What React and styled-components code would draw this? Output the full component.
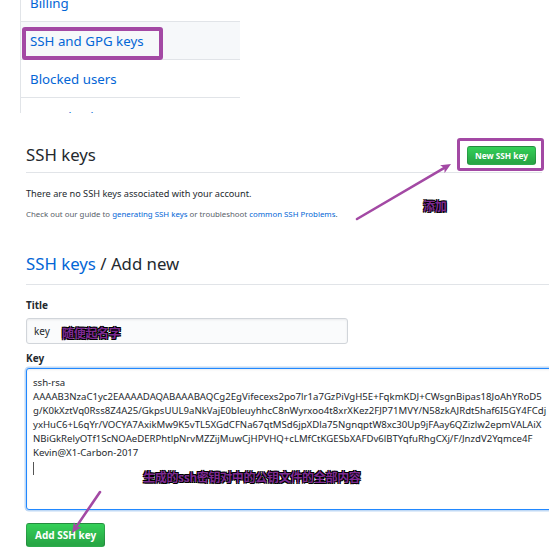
import React from "react";
import styled, { createGlobalStyle } from "styled-components";

const GlobalStyle = createGlobalStyle`
  html, body { margin: 0; padding: 0; background: #fff; }
  body {
    width: 549px;
    height: 556px;
    overflow: hidden;
    font-family: "Noto Sans", "Open Sans", sans-serif;
    color: #24292e;
  }
`;

const PURPLE = "#a349a4";

const Page = styled.div`
  position: relative;
  width: 549px;
  height: 556px;
  overflow: hidden;
`;

const SideMenu = styled.nav`
  margin-left: 20px;
  width: 219px;
  height: 113px;
  overflow: hidden;
  border-left: 1px solid #e1e4e8;
`;

const MenuList = styled.ul`
  list-style: none;
  margin: -16px 0 0;
  padding: 0;
`;

const MenuItem = styled.li`
  position: relative;
  height: 37px;
  display: flex;
  align-items: center;
  padding-left: 9px;
  border-bottom: 1px solid #e1e4e8;
  font-size: 13.3px;
  color: #0366d6;
  background: ${(p) => (p.$selected ? "#f6f8fa" : "transparent")};
`;

const HighlightBox = styled.span`
  position: absolute;
  left: ${(p) => p.$left}px;
  top: ${(p) => p.$top}px;
  width: ${(p) => p.$w}px;
  height: ${(p) => p.$h}px;
  box-sizing: border-box;
  border: ${(p) => p.$b}px solid ${PURPLE};
  border-radius: 3px;
  pointer-events: none;
`;

const Main = styled.main`
  margin-left: 26px;
`;

const Section = styled.section`
  width: ${(p) => p.$width}px;
  margin-top: ${(p) => p.$top}px;
`;

const Subhead = styled.div`
  display: flex;
  align-items: center;
  justify-content: space-between;
  padding-bottom: ${(p) => p.$pb}px;
  border-bottom: 1px solid #e1e4e8;
`;

const Heading = styled.h2`
  margin: 0;
  font-size: 16.8px;
  font-weight: 400;
  line-height: 22px;
  color: #24292e;
`;

const HeadLink = styled.span`
  color: #0366d6;
`;

const GreenButton = styled.button`
  position: relative;
  display: inline-flex;
  align-items: center;
  justify-content: center;
  box-sizing: border-box;
  height: ${(p) => p.$h}px;
  padding: 0 ${(p) => p.$px}px;
  margin-right: ${(p) => p.$mr || 0}px;
  font-family: inherit;
  font-size: ${(p) => p.$fs}px;
  font-weight: 700;
  color: #fff;
  background: linear-gradient(-180deg, #34d058 0%, #28a745 90%);
  border: 1px solid rgba(27, 31, 35, 0.2);
  border-radius: 3px;
  white-space: nowrap;
`;

const Plain = styled.p`
  margin: ${(p) => p.$mt}px 0 0;
  font-size: ${(p) => p.$fs}px;
  line-height: ${(p) => p.$lh}px;
  color: ${(p) => p.$color || "#24292e"};
`;

const A = styled.span`
  color: #0366d6;
`;

const Label = styled.div`
  margin-top: ${(p) => p.$mt}px;
  font-size: 10px;
  font-weight: 700;
  line-height: 14px;
`;

const TitleInput = styled.div`
  margin-top: 6px;
  box-sizing: border-box;
  width: 322px;
  height: 26px;
  display: flex;
  align-items: center;
  padding-left: 7px;
  background: #fafbfc;
  border: 1px solid #d1d5da;
  border-radius: 3px;
  box-shadow: inset 0 1px 2px rgba(27, 31, 35, 0.075);
  font-size: 10px;
  color: #24292e;
`;

const KeyArea = styled.div`
  margin-top: 3px;
  box-sizing: border-box;
  width: 560px;
  height: 142px;
  padding: 7px 6px 5px;
  background: #fff;
  border: 1px solid #2188ff;
  border-radius: 3px;
  box-shadow: inset 0 1px 2px rgba(27, 31, 35, 0.075), 0 0 0 1.5px rgba(3, 102, 214, 0.25);
  font-size: 9.6px;
  line-height: 14px;
  color: #24292e;
  white-space: nowrap;
  overflow: hidden;
`;

const Caret = styled.span`
  display: block;
  width: 1px;
  height: 13px;
  margin-top: 2px;
  background: #555;
`;

const SubmitRow = styled.div`
  margin-top: 12px;
`;

const Note = styled.span`
  position: absolute;
  left: ${(p) => p.$x}px;
  top: ${(p) => p.$y}px;
  font-family: "Noto Sans CJK SC", "Noto Sans", sans-serif;
  font-size: ${(p) => p.$fs}px;
  font-weight: 700;
  line-height: 1;
  color: #7d2a92;
  letter-spacing: -0.3px;
  text-shadow: 1px 1px 0 #000, -1px 1px 0 #000, 1px -1px 0 #000, -1px -1px 0 #000;
  white-space: nowrap;
  pointer-events: none;
`;

const Overlay = styled.svg`
  position: absolute;
  left: 0;
  top: 0;
  pointer-events: none;
`;

function Arrow({ x1, y1, x2, y2 }) {
  const ang = Math.atan2(y2 - y1, x2 - x1);
  const len = 11;
  const spread = 0.42;
  const ax = x2 - len * Math.cos(ang - spread);
  const ay = y2 - len * Math.sin(ang - spread);
  const bx = x2 - len * Math.cos(ang + spread);
  const by = y2 - len * Math.sin(ang + spread);
  const mx = x2 - len * 0.7 * Math.cos(ang);
  const my = y2 - len * 0.7 * Math.sin(ang);
  return (
    <g>
      <line x1={x1} y1={y1} x2={mx} y2={my} stroke={PURPLE} strokeWidth="2.6" strokeLinecap="round" />
      <polygon points={`${x2},${y2} ${ax},${ay} ${mx},${my} ${bx},${by}`} fill={PURPLE} />
    </g>
  );
}

const keyLines = [
  "ssh-rsa",
  "AAAAB3NzaC1yc2EAAAADAQABAAABAQCg2EgVifecexs2po7lr1a7GzPiVgH5E+FqkmKDJ+CWsgnBipas18JoAhYRoD5",
  "g/K0kXztVq0Rss8Z4A25/GkpsUUL9aNkVajE0bleuyhhcC8nWyrxoo4t8xrXKez2FJP71MVY/N58zkAJRdt5haf6I5GY4FCdj",
  "yxHuC6+L6qYr/VOCYA7AxikMw9K5vTL5XGdCFNa67qtMSd6jpXDla75NgnqptW8xc30Up9jFAay6QZizlw2epmVALAiX",
  "NBiGkRelyOTf1ScNOAeDERPhtlpNrvMZZijMuwCjHPVHQ+cLMfCtKGESbXAFDv6lBTYqfuRhgCXj/F/JnzdV2Yqmce4F",
  "Kevin@X1-Carbon-2017",
];

export default function App() {
  return (
    <Page>
      <GlobalStyle />
      <SideMenu>
        <MenuList>
          <MenuItem>Billing</MenuItem>
          <MenuItem $selected>
            SSH and GPG keys
            <HighlightBox $left={1} $top={5} $w={141} $h={33} $b={4} />
          </MenuItem>
          <MenuItem>Blocked users</MenuItem>
          <MenuItem>Repositories</MenuItem>
        </MenuList>
      </SideMenu>

      <Main>
        <Section $width={516} $top={31}>
          <Subhead $pb={6}>
            <Heading>SSH keys</Heading>
            <GreenButton $h={19} $px={7} $fs={8.3} $mr={6}>
              New SSH key
              <HighlightBox $left={-11} $top={-9} $w={87} $h={33} $b={3} />
            </GreenButton>
          </Subhead>
          <Plain $mt={13} $fs={9.2} $lh={16}>
            There are no SSH keys associated with your account.
          </Plain>
          <Plain $mt={5} $fs={7.85} $lh={14} $color="#586069">
            Check out our guide to <A>generating SSH keys</A> or troubleshoot <A>common SSH Problems</A>.
          </Plain>
        </Section>

        <Section $width={600} $top={32}>
          <Subhead $pb={9}>
            <Heading>
              <HeadLink>SSH keys</HeadLink> / Add new
            </Heading>
          </Subhead>
          <Label $mt={13}>Title</Label>
          <TitleInput>key</TitleInput>
          <Label $mt={7}>Key</Label>
          <KeyArea>
            {keyLines.map((l) => (
              <div key={l}>{l}</div>
            ))}
            <Caret />
          </KeyArea>
          <SubmitRow>
            <GreenButton $h={24} $px={8} $fs={10}>
              Add SSH key
            </GreenButton>
          </SubmitRow>
        </Section>
      </Main>

      <Overlay width="549" height="556" viewBox="0 0 549 556">
        <Arrow x1={357} y1={219} x2={451} y2={164} />
        <Arrow x1={100} y1={492} x2={72} y2={533} />
      </Overlay>
      <Note $x={423} $y={200} $fs={12}>添加</Note>
      <Note $x={62} $y={327} $fs={12}>随便起名字</Note>
      <Note $x={143} $y={471} $fs={12}>生成的ssh密钥对中的公钥文件的全部内容</Note>
    </Page>
  );
}
